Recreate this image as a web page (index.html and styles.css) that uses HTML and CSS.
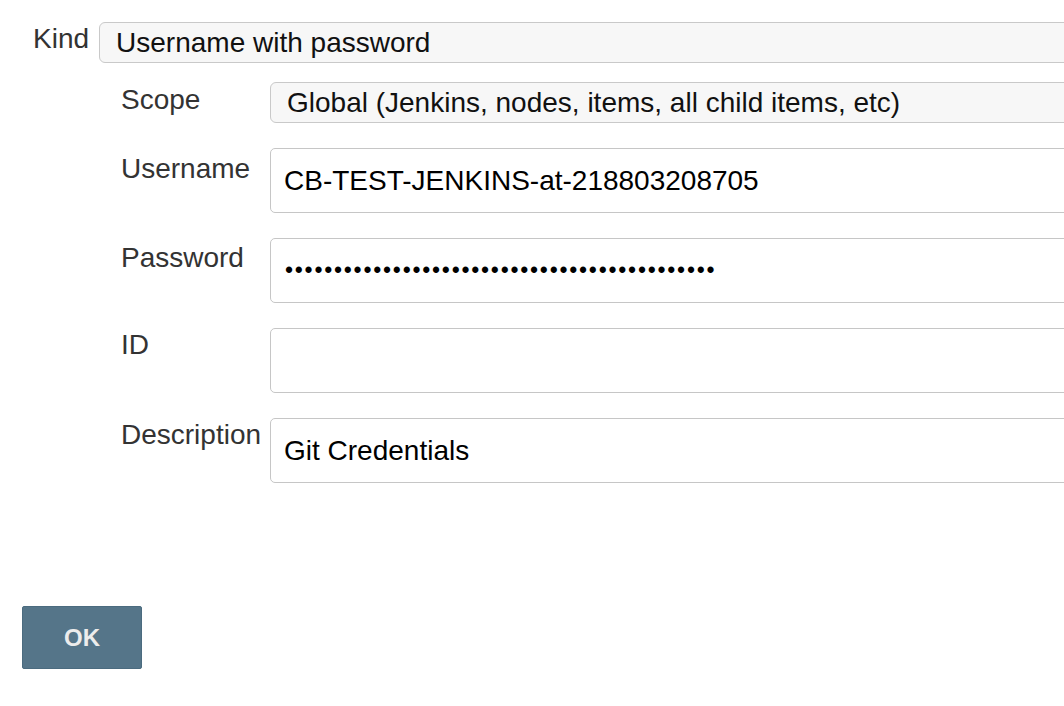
FILE: index.html
```html
<!DOCTYPE html>
<html lang="en">
<head>
<meta charset="utf-8">
<title>Credentials</title>
<link rel="stylesheet" href="styles.css">
</head>
<body>
<form class="page">
  <div class="kind-row">
    <span class="kind-label">Kind</span>
    <div class="select select-kind">Username with password</div>
  </div>
  <div class="fields">
    <span class="label label-scope">Scope</span>
    <div class="select">Global (Jenkins, nodes, items, all child items, etc)</div>

    <span class="label label-user">Username</span>
    <input class="input" type="text" value="CB-TEST-JENKINS-at-218803208705">

    <span class="label label-pass">Password</span>
    <input class="input input-pass" type="password" value="xxxxxxxxxxxxxxxxxxxxxxxxxxxxxxxxxxxxxxxxxxxx">

    <span class="label label-id">ID</span>
    <input class="input" type="text" value="">

    <span class="label label-desc">Description</span>
    <input class="input" type="text" value="Git Credentials">
  </div>
  <button class="ok" type="button">OK</button>
</form>
</body>
</html>
```

FILE: styles.css
```css
html, body {
  margin: 0;
  padding: 0;
  overflow: hidden;
  background: #ffffff;
}

body {
  font-family: "Liberation Sans", Arial, Helvetica, sans-serif;
  font-size: 28px;
  color: #333333;
}

.page {
  padding-top: 22px;
}

.kind-row {
  display: flex;
  align-items: flex-start;
  gap: 10px;
  padding-left: 33px;
  margin-right: -30px;
}

.kind-label {
  line-height: 32px;
  padding-top: 1px;
  color: #333333;
}

.select {
  flex: 1;
  box-sizing: border-box;
  height: 41px;
  line-height: 32px;
  padding: 4px 16px 0 16px;
  border: 1px solid #c9c9c9;
  border-radius: 6px;
  background: #f7f7f7;
  color: #111111;
  white-space: nowrap;
}

.fields {
  display: grid;
  grid-template-columns: 149px 1fr;
  row-gap: 25px;
  margin-top: 19px;
  padding-left: 121px;
  margin-right: -30px;
}

.label {
  line-height: 32px;
  color: #333333;
}

.label-scope { padding-top: 2px; }
.label-user { padding-top: 5px; }
.label-pass { padding-top: 4px; }
.label-id { padding-top: 1px; }
.label-desc { padding-top: 1px; }

.input {
  box-sizing: border-box;
  width: 100%;
  height: 65px;
  margin: 0;
  padding: 0 13px;
  border: 1px solid #c6c6c6;
  border-radius: 5px;
  background: #ffffff;
  font-family: inherit;
  font-size: 28px;
  line-height: 32px;
  color: #000000;
  outline: none;
}

.input-pass {
  font-size: 23px;
  letter-spacing: 1.75px;
  padding-left: 14px;
  padding-bottom: 1px;
}

.ok {
  display: block;
  box-sizing: border-box;
  width: 120px;
  height: 63px;
  margin: 123px 0 0 22px;
  padding: 0;
  border: 1px solid #4b6b7f;
  border-radius: 2px;
  background: #557589;
  color: #ececec;
  font-family: inherit;
  font-size: 24px;
  font-weight: bold;
  cursor: pointer;
}
```
